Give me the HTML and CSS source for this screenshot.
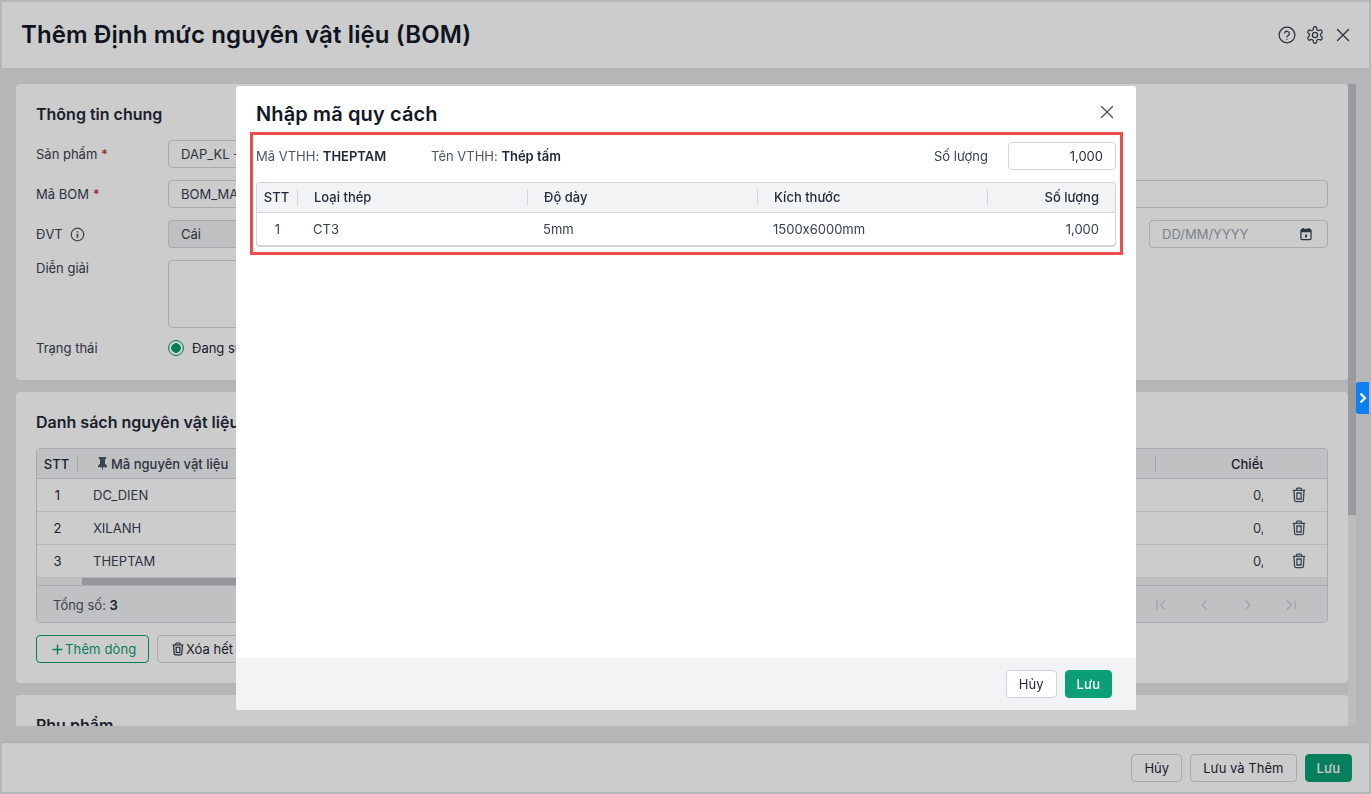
FILE: index.html
```html
<!DOCTYPE html>
<html lang="vi">
<head>
<meta charset="utf-8">
<title>Thêm Định mức nguyên vật liệu (BOM)</title>
<link rel="stylesheet" href="styles.css">
</head>
<body>
<svg class="defs" width="0" height="0" aria-hidden="true">
  <symbol id="i-x" viewBox="0 0 16 16"><path d="M2.500 2.500l11 11M13.500 2.500l-11 11" fill="none" stroke="currentColor" stroke-width="1.400" stroke-linecap="round"/></symbol>
  <symbol id="i-trash" viewBox="0 0 16 16"><path d="M5.500 3V2.200c0-.6.4-1 1-1h3c.6 0 1 .4 1 1V3M1.800 3.400h12.400M3 3.600l.6 9.600c0 .9.6 1.500 1.500 1.500h5.800c.9 0 1.500-.6 1.500-1.500l.6-9.600M5.900 6h4.200v6H5.900z" fill="none" stroke="currentColor" stroke-width="1.300"/></symbol>
</svg>
<div class="window">
  <header class="top">
    <h1>Thêm Định mức nguyên vật liệu (BOM)</h1>
    <div class="top-icons">
      <svg class="ic18" viewBox="0 0 24 24" fill="none" stroke="currentColor" stroke-width="1.700" stroke-linecap="round" stroke-linejoin="round"><circle cx="12" cy="12" r="10.500"/><path d="M8.800 9.200a3.300 3.300 0 0 1 6.400 1c0 2.200-3.200 2.600-3.200 4.400"/><path d="M12 17.800h.01"/></svg>
      <svg class="ic18" viewBox="0 0 24 24" fill="none" stroke="currentColor" stroke-width="1.700" stroke-linecap="round" stroke-linejoin="round"><path d="M12.220 1h-.44a2 2 0 0 0-2 2v.98a2 2 0 0 1-1 1.730l-.43.250a2 2 0 0 1-2 0l-.55-.28a2 2 0 0 0-2.730.730l-.42.780a2 2 0 0 0 .730 2.730l.350.200a2 2 0 0 1 1 1.720v.510a2 2 0 0 1-1 1.740l-.350.190a2 2 0 0 0-.730 2.730l.420.780a2 2 0 0 0 2.730.730l.550-.28a2 2 0 0 1 2 0l.43.250a2 2 0 0 1 1 1.730V21a2 2 0 0 0 2 2h.44a2 2 0 0 0 2-2v-.98a2 2 0 0 1 1-1.730l.43-.25a2 2 0 0 1 2 0l.55.28a2 2 0 0 0 2.730-.73l.42-.79a2 2 0 0 0-.73-2.730l-.35-.18a2 2 0 0 1-1-1.740v-.5a2 2 0 0 1 1-1.740l.35-.19a2 2 0 0 0 .73-2.730l-.42-.78a2 2 0 0 0-2.730-.73l-.55.28a2 2 0 0 1-2 0l-.43-.25a2 2 0 0 1-1-1.730V3a2 2 0 0 0-2-2z"/><circle cx="12" cy="12" r="3.400"/></svg>
      <svg class="ic16 top-x"><use href="#i-x"/></svg>
    </div>
  </header>

  <div class="body">
    <main class="scroller">
      <section class="card card-general">
        <h2>Thông tin chung</h2>
        <div class="form-row">
          <label class="lbl">Sản phẩm <span class="req">*</span></label>
          <div class="input input-left">DAP_KL -</div>
        </div>
        <div class="form-row">
          <label class="lbl">Mã BOM <span class="req">*</span></label>
          <div class="input">BOM_MA</div>
        </div>
        <div class="form-row">
          <label class="lbl">ĐVT
            <svg class="ic15 info" viewBox="0 0 16 16" fill="none" stroke="currentColor" stroke-width="1.300"><circle cx="8" cy="8" r="6.700"/><path d="M8 7.200v4.200M8 4.400v1.400" stroke-width="1.800"/></svg>
          </label>
          <div class="input input-off">Cái</div>
          <div class="input input-date">
            <span class="ph">DD/MM/YYYY</span>
            <svg class="ic14" viewBox="0 0 16 16"><path d="M5 1v2.500M11 1v2.500" stroke="currentColor" stroke-width="1.500" fill="none"/><rect x="2.200" y="2.700" width="11.600" height="11.600" rx="1.500" fill="none" stroke="currentColor" stroke-width="1.400"/><path d="M2.500 3h11v3h-11z" fill="currentColor"/><path d="M7 8.500h2v3.500H7z" fill="currentColor"/></svg>
          </div>
        </div>
        <div class="form-row form-row-tall">
          <label class="lbl">Diễn giải</label>
          <div class="input input-area input-left"></div>
        </div>
        <div class="form-row form-row-status">
          <label class="lbl">Trạng thái</label>
          <span class="radio"></span>
          <span class="radio-text">Đang sử dụng</span>
        </div>
      </section>

      <section class="card card-list">
        <h2>Danh sách nguyên vật liệu</h2>
        <div class="grid-box">
          <div class="g-row g-head">
            <div class="g-stt g-div">STT</div>
            <div class="g-code">
              <svg class="pin" viewBox="0 0 9 14"><path d="M.8 0h7.400v1.800L7 2.600v4.200L9 8.800v1.400H5.100L4.500 14l-.6-3.800H0V8.800l2-2V2.600L.8 1.800z" fill="currentColor"/></svg>
              Mã nguyên vật liệu
            </div>
            <div class="g-clip g-clip-head"><span class="g-div-left"></span>Chiều dài</div>
            <div class="g-act"></div>
          </div>
          <div class="g-row">
            <div class="g-stt">1</div><div class="g-code g-val">DC_DIEN</div>
            <div class="g-clip g-clip-val">0,000</div>
            <div class="g-act"><svg class="ic16"><use href="#i-trash"/></svg></div>
          </div>
          <div class="g-row">
            <div class="g-stt">2</div><div class="g-code g-val">XILANH</div>
            <div class="g-clip g-clip-val">0,000</div>
            <div class="g-act"><svg class="ic16"><use href="#i-trash"/></svg></div>
          </div>
          <div class="g-row g-row-last">
            <div class="g-stt">3</div><div class="g-code g-val">THEPTAM</div>
            <div class="g-clip g-clip-val">0,000</div>
            <div class="g-act"><svg class="ic16"><use href="#i-trash"/></svg></div>
          </div>
          <div class="hbar"><div class="hbar-thumb"></div></div>
          <div class="g-foot">
            <span>Tổng số: <b>3</b></span>
            <div class="pager">
              <svg class="ic14" viewBox="0 0 14 14" fill="none" stroke="currentColor" stroke-width="1.300"><path d="M3 2.500v9M11 2.500L6.500 7l4.500 4.500"/></svg>
              <svg class="ic14" viewBox="0 0 14 14" fill="none" stroke="currentColor" stroke-width="1.300"><path d="M9.500 2.500L5 7l4.500 4.500"/></svg>
              <svg class="ic14" viewBox="0 0 14 14" fill="none" stroke="currentColor" stroke-width="1.300"><path d="M4.500 2.500L9 7l-4.500 4.500"/></svg>
              <svg class="ic14" viewBox="0 0 14 14" fill="none" stroke="currentColor" stroke-width="1.300"><path d="M11 2.500v9M3 2.500L7.500 7 3 11.500"/></svg>
            </div>
          </div>
        </div>
        <div class="list-actions">
          <button class="btn btn-outline-green">
            <svg class="ic11" viewBox="0 0 12 12"><path d="M6 .5v11M.5 6h11" stroke="currentColor" stroke-width="1.600" fill="none"/></svg>
            Thêm dòng
          </button>
          <button class="btn btn-del"><svg class="ic14"><use href="#i-trash"/></svg>Xóa hết dòng</button>
        </div>
      </section>

      <section class="card card-extra">
        <h2>Phụ phẩm</h2>
      </section>
    </main>
    <div class="vbar"><div class="vbar-thumb"></div></div>
    <div class="side-tab">
      <svg viewBox="0 0 8 12" width="8" height="12" fill="none" stroke="#fff" stroke-width="2.200"><path d="M1.500 1.500L6 6l-4.500 4.500"/></svg>
    </div>
  </div>

  <footer class="bottom">
    <button class="btn">Hủy</button>
    <button class="btn">Lưu và Thêm</button>
    <button class="btn btn-primary">Lưu</button>
  </footer>
</div>

<div class="overlay">
  <div class="modal">
    <div class="modal-head">
      <h3>Nhập mã quy cách</h3>
      <svg class="ic16 modal-x"><use href="#i-x"/></svg>
    </div>
    <div class="modal-body">
      <div class="mark">
        <div class="info-row">
          <span class="pair pair-code">Mã VTHH: <b>THEPTAM</b></span>
          <span class="pair">Tên VTHH: <b>Thép tấm</b></span>
          <span class="qty-label">Số lượng</span>
          <div class="qty-input">1,000</div>
        </div>
        <div class="spec">
          <div class="spec-row spec-head">
            <div class="c-stt c-div">STT</div>
            <div class="c-txt c-div">Loại thép</div>
            <div class="c-txt c-div">Độ dày</div>
            <div class="c-txt c-div">Kích thước</div>
            <div class="c-num">Số lượng</div>
          </div>
          <div class="spec-row spec-data">
            <div class="c-stt">1</div>
            <div class="c-txt">CT3</div>
            <div class="c-txt">5mm</div>
            <div class="c-txt">1500x6000mm</div>
            <div class="c-num">1,000</div>
          </div>
        </div>
      </div>
    </div>
    <div class="modal-foot">
      <button class="btn btn-white">Hủy</button>
      <button class="btn btn-primary">Lưu</button>
    </div>
  </div>
</div>
</body>
</html>
```

FILE: styles.css
```css
* { box-sizing: border-box; }
html, body { margin: 0; height: 100%; }
body {
  width: 1371px;
  height: 794px;
  overflow: hidden;
  font-family: Inter, "Noto Sans", sans-serif;
  font-size: 13px;
  font-feature-settings: "calt" 0;
  color: #1f2937;
  background: #e3e4e7;
}
.defs { position: absolute; }
h1, h2, h3 { margin: 0; }
svg { display: block; flex: none; }
.ic18 { width: 18px; height: 18px; }
.ic16 { width: 16px; height: 16px; }
.ic15 { width: 15px; height: 15px; }
.ic14 { width: 14px; height: 14px; }
.ic11 { width: 11px; height: 11px; }
.pin { width: 9px; height: 14px; }

.window {
  height: 794px;
  padding: 2px;
  display: flex;
  flex-direction: column;
}
.top {
  height: 66px;
  flex: none;
  padding: 0 18px 0 19px;
  background: #fff;
  display: flex;
  align-items: center;
  justify-content: space-between;
}
.top h1 { font-size: 24px; line-height: 32px; font-weight: 600; color: #111827; letter-spacing: .12px; }
.top-icons { display: flex; align-items: center; gap: 10px; color: #374151; }
.top-x { margin-left: 1px; }

.body {
  flex: 1;
  min-height: 0;
  display: flex;
  padding: 16px 0 16px 14px;
  position: relative;
}
.scroller {
  width: 1332px;
  flex: none;
  overflow: hidden;
  display: flex;
  flex-direction: column;
  gap: 12px;
}
.vbar { width: 8px; background: #ebebec; flex: none; }
.vbar-thumb { height: 431px; background: #c0c1c5; }

.side-tab {
  position: absolute;
  z-index: 10;
  left: 1354px;
  top: 314px;
  width: 13px;
  height: 32px;
  background: #0d7ff2;
  border-radius: 3px 0 0 3px;
  display: flex;
  align-items: center;
  justify-content: center;
}

.card {
  background: #fff;
  border-radius: 4px;
  padding: 20px;
  flex: none;
}
.card h2 { font-size: 16px; line-height: 20px; font-weight: 600; color: #1f2937; }
.card-general { height: 296px; }
.card-general h2 { margin-bottom: 16px; }
.card-list { height: 291px; }
.card-list h2 { margin-bottom: 16px; }
.card-extra { height: 80px; }

.form-row { display: flex; align-items: center; height: 28px; margin-bottom: 12px; }
.form-row-tall { height: 68px; align-items: flex-start; }
.form-row-status { height: 16px; margin-top: 12px; margin-bottom: 0; }
.lbl { width: 132px; flex: none; display: flex; align-items: center; gap: 7px; color: #374151; }
.lbl .req { margin-left: -3px; }
.form-row-tall .lbl { line-height: 16px; }
.req { color: #c02626; }
.input {
  flex: 1;
  height: 28px;
  border: 1px solid #d1d5db;
  border-radius: 4px;
  padding: 0 12px;
  display: flex;
  align-items: center;
  color: #374151;
  background: #fff;
  white-space: nowrap;
  overflow: hidden;
}
.input-left { flex: none; width: 800px; }
.input-off { background: #f0f1f3; flex: none; width: 800px; }
.input-date {
  flex: none;
  width: 179px;
  margin-left: 181px;
  justify-content: space-between;
  padding-right: 14px;
}
.ph { color: #9ca3af; }
.input-area { height: 68px; }
.info { color: #4b5563; }
.radio {
  width: 16px;
  height: 16px;
  border-radius: 50%;
  border: 1.500px solid #0a9f74;
  background: radial-gradient(circle, #0a9f74 0 4.500px, #fff 5px);
  flex: none;
}
.radio-text { margin-left: 8px; }

.grid-box { border: 1px solid #d1d5db; border-radius: 4px; height: 175px; overflow: hidden; }
.g-row {
  height: 33px;
  display: grid;
  grid-template-columns: 41px 1fr 108px 64px;
  align-items: center;
  border-bottom: 1px solid #e5e7eb;
  background: #fff;
}
.g-row-last { height: 32px; border-bottom: 0; }
.g-head { height: 30px; background: #f1f2f4; border-bottom: 1px solid #d1d5db; font-weight: 500; }
.g-stt { text-align: center; position: relative; }
.g-div::after, .g-div-left {
  content: "";
  position: absolute;
  top: 50%;
  height: 16px;
  margin-top: -8px;
  width: 1px;
  background: #d1d5db;
}
.g-div::after { right: 0; }
.g-div-left { left: 0; }
.g-head .g-stt { padding-right: 2px; }
.g-code { display: flex; align-items: center; gap: 4px; padding-left: 15px; }
.g-head .g-code { padding-left: 20px; color: #374151; }
.g-head .g-code svg { color: #4b5563; margin-top: 1px; }
.g-val { color: #374151; }
.g-clip { overflow: hidden; white-space: nowrap; position: relative; height: 100%; display: flex; align-items: center; }
.g-clip-head { padding-left: 76px; }
.g-clip-val { padding-left: 98px; color: #374151; }
.g-act { display: flex; justify-content: center; align-items: center; color: #4b5563; padding-left: 7px; }
.hbar { height: 9px; background: #f0f1f1; border-top: 1px solid #e5e7eb; padding-left: 45px; border-bottom: 1px solid #d1d5db; }
.hbar-thumb { height: 100%; width: 1050px; background: #bcbdc3; }
.g-foot {
  height: 36px;
  padding: 1px 29px 0 16px;
  background: #f1f2f4;
  display: flex;
  align-items: center;
  justify-content: space-between;
  color: #4b5563;
}
.g-foot b { color: #1f2937; font-weight: 600; }
.pager { display: flex; gap: 29.500px; color: #c9cbd1; }

.list-actions { display: flex; gap: 8px; margin-top: 12px; }
.btn {
  height: 28px;
  padding: 0 12px;
  font: inherit;
  font-feature-settings: inherit;
  color: #1f2937;
  background: transparent;
  border: 1px solid #d1d5db;
  border-radius: 4px;
  display: inline-flex;
  align-items: center;
  justify-content: center;
  white-space: nowrap;
  letter-spacing: .03px;
}
.btn-outline-green { width: 113px; border-color: #0a9f74; color: #0a9f74; gap: 2px; padding: 0 0 0 15px; letter-spacing: .15px; justify-content: flex-start; }
.btn-del { padding: 0 13px; gap: 1px; width: 140px; justify-content: flex-start; }
.btn-primary { background: #0a9f74; border-color: #0a9f74; color: #fff; font-weight: 500; padding: 0 11px; min-width: 47px; }
.btn-white { background: #fff; }

.bottom {
  height: 50px;
  flex: none;
  background: #fff;
  border-top: 1px solid #d8dade;
  display: flex;
  align-items: center;
  justify-content: flex-end;
  gap: 8px;
  padding: 0 17px 0 0;
}

.overlay {
  position: fixed;
  inset: 0;
  background: rgba(0, 0, 0, .2);
  display: flex;
  justify-content: center;
  align-items: flex-start;
  padding: 86px 0 0 1px;
}
.modal {
  width: 900px;
  height: 624px;
  background: #fff;
  border-radius: 3px;
  display: flex;
  flex-direction: column;
}
.modal-head {
  height: 46px;
  flex: none;
  padding: 16px 21px 0 20px;
  display: flex;
  justify-content: space-between;
  align-items: flex-start;
}
.modal-head h3 { font-size: 20px; line-height: 24px; font-weight: 600; color: #111827; letter-spacing: .12px; }
.modal-x { color: #4b5563; margin-top: 2px; }
.modal-body { flex: 1; padding: 0 13px 0 14px; }
.mark { border: 3px solid #ef4d4a; padding: 7px 4px 0 3px; height: 123px; }
.info-row { display: flex; align-items: center; height: 28px; margin-bottom: 12px; }
.pair { color: #4b5563; }
.pair b { color: #1f2937; font-weight: 600; }
.pair-code { width: 175px; }
.qty-label { margin-left: auto; margin-right: 20px; color: #374151; }
.qty-input {
  width: 108px;
  height: 28px;
  border: 1px solid #d1d5db;
  border-radius: 4px;
  padding: 0 12px;
  line-height: 26px;
  text-align: right;
}
.spec { border: 1px solid #d1d5db; border-radius: 4px; height: 65px; border-bottom-width: 2px; }
.spec-row {
  display: grid;
  grid-template-columns: 41px 230px 230px 230px 1fr;
  align-items: center;
}
.spec-head { height: 30px; padding-bottom: 1px; background: #f2f3f5; border-bottom: 1px solid #d1d5db; font-weight: 500; border-radius: 4px 4px 0 0; }
.spec-data { height: 32px; color: #374151; }
.c-stt { text-align: center; position: relative; }
.spec-head .c-stt { padding-right: 2px; }
.c-txt { padding-left: 15px; position: relative; }
.spec-head .c-txt { padding-left: 16px; }
.c-num { text-align: right; padding-right: 16px; }
.c-div::after {
  content: "";
  position: absolute;
  right: 0;
  top: 50%;
  height: 16px;
  margin-top: -8px;
  width: 1px;
  background: #d1d5db;
}
.modal-foot {
  height: 52px;
  flex: none;
  background: #f2f3f5;
  border-radius: 0 0 3px 3px;
  display: flex;
  align-items: center;
  justify-content: flex-end;
  gap: 8px;
  padding: 0 24px 0 0;
}
```
